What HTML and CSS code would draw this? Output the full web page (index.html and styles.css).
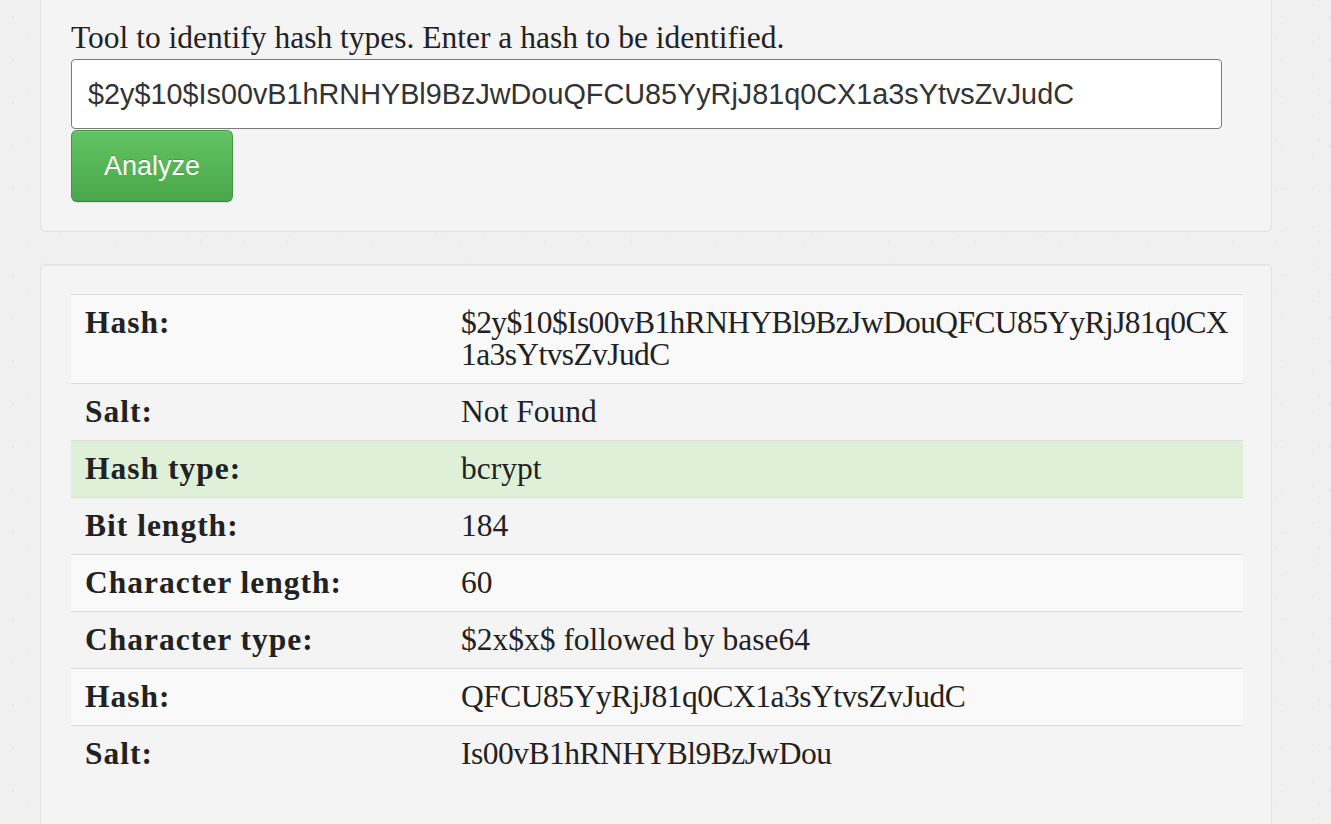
FILE: index.html
```html
<!DOCTYPE html>
<html lang="en">
<head>
<meta charset="utf-8">
<title>Hash Type Identifier</title>
<link rel="stylesheet" href="styles.css">
</head>
<body>
<main class="page">
  <section class="well well-form">
    <p class="intro">Tool to identify hash types. Enter a hash to be identified.</p>
    <form class="hash-form">
      <input class="hash-input" type="text" value="$2y$10$Is00vB1hRNHYBl9BzJwDouQFCU85YyRjJ81q0CX1a3sYtvsZvJudC">
      <button class="btn-analyze" type="button">Analyze</button>
    </form>
  </section>
  <section class="well well-result">
    <table class="result-table">
      <tbody>
        <tr><th>Hash:</th><td class="hash-value breakable">$2y$10$Is00vB1hRNHYBl9BzJwDouQFCU85YyRjJ81q0CX1a3sYtvsZvJudC</td></tr>
        <tr><th>Salt:</th><td>Not Found</td></tr>
        <tr class="success"><th>Hash type:</th><td>bcrypt</td></tr>
        <tr><th>Bit length:</th><td>184</td></tr>
        <tr><th>Character length:</th><td>60</td></tr>
        <tr><th>Character type:</th><td>$2x$x$ followed by base64</td></tr>
        <tr><th>Hash:</th><td class="hash-value">QFCU85YyRjJ81q0CX1a3sYtvsZvJudC</td></tr>
        <tr><th>Salt:</th><td class="hash-value">Is00vB1hRNHYBl9BzJwDou</td></tr>
      </tbody>
    </table>
  </section>
</main>
</body>
</html>
```
FILE: styles.css
```css
html, body {
  margin: 0;
  padding: 0;
}
body {
  background-color: #f0f0f0;
  background-image:
    radial-gradient(circle at 13px 17px, #e6e6e6 0.6px, transparent 1.1px),
    radial-gradient(circle at 41px 5px, #e8e8e8 0.6px, transparent 1.1px),
    radial-gradient(circle at 29px 38px, #e7e7e7 0.5px, transparent 1px),
    radial-gradient(circle at 3px 31px, #e9e9e9 0.5px, transparent 1px);
  background-size: 47px 43px, 53px 37px, 43px 51px, 37px 41px;
  font-family: "Liberation Serif", "Times New Roman", serif;
  color: #222;
  overflow: hidden;
  height: 824px;
}
.page {
  display: flex;
  flex-direction: column;
  gap: 32px;
  padding: 0 59px 0 40px;
  margin-top: -10px;
}
.well {
  background: #f4f4f4;
  border: 1px solid #e2e2e2;
  border-radius: 6px;
  box-shadow: inset 0 1px 1px rgba(0,0,0,0.03);
  padding: 29px 28px 29px 30px;
}
.well-form {
  padding-top: 31px;
}
.intro {
  margin: 0 0 5px;
  font-size: 31.5px;
  line-height: 32px;
  color: #222;
}
.hash-form {
  display: flex;
  flex-direction: column;
  align-items: flex-start;
  gap: 1px;
}
.hash-input {
  box-sizing: border-box;
  width: 1151px;
  height: 70px;
  padding: 0 16px;
  border: 1px solid #7a7a7a;
  border-radius: 4px;
  background: #fff;
  font-family: "Liberation Sans", Arial, sans-serif;
  font-size: 28.8px;
  color: #333;
  outline: none;
}
.btn-analyze {
  box-sizing: border-box;
  width: 162px;
  height: 72px;
  border: 1px solid #419641;
  border-bottom-color: #3a853a;
  border-radius: 6px;
  background: linear-gradient(to bottom, #62c462 0%, #4aa64a 100%);
  box-shadow: inset 0 1px 0 rgba(255,255,255,0.15), 0 1px 1px rgba(0,0,0,0.08);
  color: #fff;
  font-family: "Liberation Sans", Arial, sans-serif;
  font-size: 27px;
  text-shadow: 0 -1px 0 rgba(0,0,0,0.2);
  padding: 0;
}
.well-result {
  padding-bottom: 90px;
}
.result-table {
  width: 100%;
  border-collapse: collapse;
  border-spacing: 0;
}
.result-table th,
.result-table td {
  border-top: 1px solid #dddddd;
  padding: 12px 13px 12px 14px;
  font-size: 31.5px;
  line-height: 32px;
  text-align: left;
  vertical-align: top;
  color: #222;
}
.result-table th {
  width: 349px;
  font-weight: bold;
  letter-spacing: 1px;
}
.result-table tr:nth-child(odd) th,
.result-table tr:nth-child(odd) td {
  background: #f9f9f9;
}
.result-table tr.success th,
.result-table tr.success td {
  background: #dff0d8;
}
.hash-value {
  letter-spacing: -0.5px;
}
.breakable {
  word-break: break-all;
  letter-spacing: -0.6px;
}
```
